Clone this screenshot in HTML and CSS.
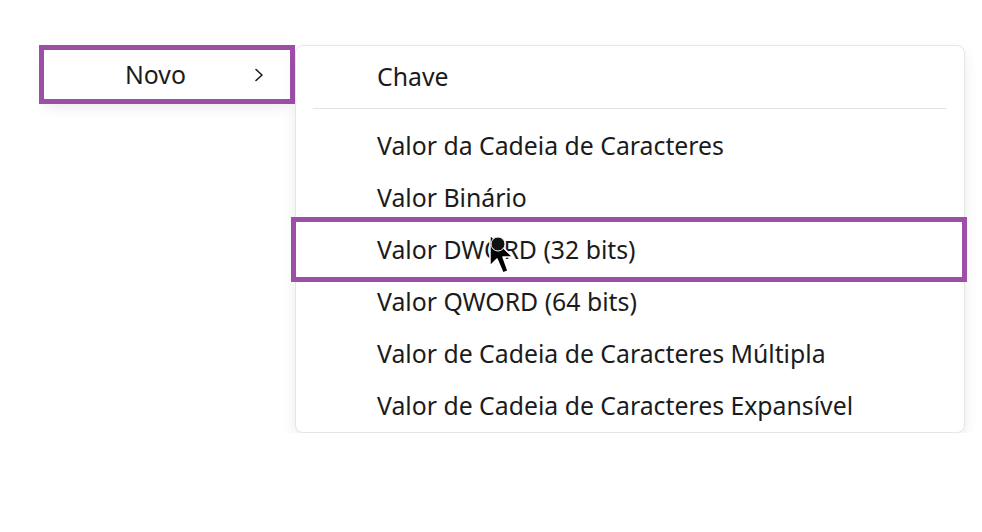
FILE: index.html
```html
<!DOCTYPE html>
<html lang="pt">
<head>
    <title>Novo</title>
    <link rel="stylesheet" href="styles.css">
</head>
<body>
    <div class="stage">
        <div class="parent-item">
            <span class="parent-label">Novo</span>
            <svg class="chevron" width="12" height="14" viewBox="0 0 12 14">
                <path d="M3 1.5 L9 7 L3 12.5" fill="none" stroke="#1b1b1b" stroke-width="1.6" stroke-linecap="round" stroke-linejoin="round"/>
            </svg>
        </div>

        <div class="submenu">
            <div class="item">Chave</div>
            <div class="divider"></div>
            <div class="item">Valor da Cadeia de Caracteres</div>
            <div class="item">Valor Binário</div>
            <div class="item marked">Valor DWORD (32 bits)
                <svg class="cursor" width="28" height="44" viewBox="0 0 28 44">
                    <path d="M2 2 L2 33 L9 26 L15 40 L20 38 L15 24 L25 24 Z" fill="#000" stroke="#fff" stroke-width="1.5" stroke-linejoin="round"/>
                    <circle cx="10" cy="11" r="7" fill="#111" stroke="#fff" stroke-width="1"/>
                </svg>
            </div>
            <div class="item">Valor QWORD (64 bits)</div>
            <div class="item">Valor de Cadeia de Caracteres Múltipla</div>
            <div class="item">Valor de Cadeia de Caracteres Expansível</div>
        </div>
    </div>
</body>
</html>
```

FILE: styles.css
```css
body {
    margin: 0;
    background: #fff;
    font-family: "Noto Sans", "Open Sans", sans-serif;
    color: #1b1b1b;
}

.stage {
    display: flex;
    align-items: flex-start;
    padding-top: 45px;
    padding-left: 39px;
}

.parent-item {
    display: flex;
    flex-shrink: 0;
    align-items: center;
    box-sizing: border-box;
    width: 256px;
    height: 59px;
    border: 5px solid #9d4fa8;
    background: #fff;
    box-shadow: 0 10px 12px -6px rgba(0, 0, 0, 0.08);
    font-size: 24.8px;
}

.parent-label {
    margin-left: 81px;
    margin-top: -2px;
}

.chevron {
    margin-left: 67px;
}

.submenu {
    box-sizing: border-box;
    width: 670px;
    height: 388px;
    padding-top: 4px;
    border: 1px solid #e6e6e6;
    border-radius: 8px;
    background: #fff;
    box-shadow: 0 6px 14px rgba(0, 0, 0, 0.08);
}

.item {
    position: relative;
    display: flex;
    align-items: center;
    height: 52px;
    padding-left: 81px;
    font-size: 24.8px;
}

.divider {
    height: 1px;
    margin: 6px 18px 10px 17px;
    background: #e3e3e3;
}

.marked::after {
    content: "";
    position: absolute;
    left: -5px;
    right: -3px;
    top: -6px;
    bottom: -7px;
    border: 5px solid #9d4fa8;
}

.cursor {
    position: absolute;
    left: 192px;
    top: 10px;
    z-index: 2;
}
```
